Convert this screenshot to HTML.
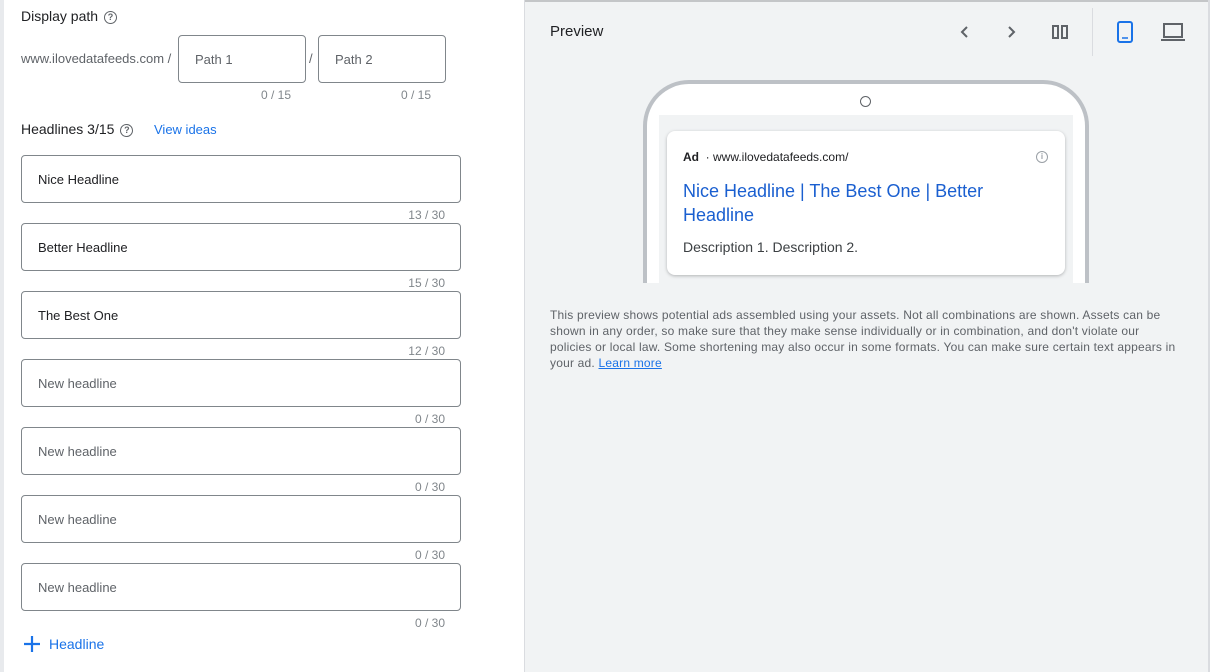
<!DOCTYPE html>
<html><head><meta charset="utf-8"><style>
*{box-sizing:border-box;margin:0;padding:0}
body{width:1210px;height:672px;overflow:hidden;font-family:"Liberation Sans",Arial,sans-serif;background:#f1f3f4;position:relative}
.a{position:absolute}
#left{left:4px;top:0;width:521px;height:672px;background:#fff;border-right:1px solid #dadce0}
.lbl{font-size:14px;color:#202124}
.q{display:inline-block;width:13px;height:13px;border:1.3px solid #5f6368;border-radius:50%;font-size:9px;line-height:11px;text-align:center;color:#5f6368;font-weight:bold;vertical-align:1px;margin-left:6px}
.in{border:1px solid #80868b;border-radius:4px;background:#fff;font-size:13px;color:#202124;padding-left:16px;display:flex;align-items:center}
.ph{color:#5f6368}
.cnt{font-size:12px;color:#80868b;text-align:right}
</style></head><body>
<div class="a" style="left:0;top:0;width:1210px;height:2px;background:#c4c6c8"></div>
<div class="a" style="left:0;top:0;width:4px;height:672px;background:#e8eaed"></div>
<div class="a" style="right:0;top:0;width:2px;height:672px;background:#dadce0"></div>
<div class="a" id="left"></div>

<div class="a lbl" style="left:21px;top:8px">Display path<span class="q">?</span></div>
<div class="a" style="left:21px;top:51px;font-size:13px;color:#5f6368">www.ilovedatafeeds.com /</div>
<div class="a in ph" style="left:178px;top:35px;width:128px;height:48px">Path 1</div>
<div class="a" style="left:309px;top:51px;font-size:13px;color:#5f6368">/</div>
<div class="a in ph" style="left:318px;top:35px;width:128px;height:48px">Path 2</div>
<div class="a cnt" style="left:240px;top:88px;width:51px">0 / 15</div>
<div class="a cnt" style="left:380px;top:88px;width:51px">0 / 15</div>

<div class="a lbl" style="left:21px;top:121px">Headlines 3/15<span class="q">?</span></div>
<div class="a" style="left:154px;top:122px;font-size:13px;color:#1a73e8">View ideas</div>

<div class="a in" style="left:21px;top:155px;width:440px;height:48px">Nice Headline</div>
<div class="a cnt" style="left:345px;top:208px;width:100px">13 / 30</div>
<div class="a in" style="left:21px;top:223px;width:440px;height:48px">Better Headline</div>
<div class="a cnt" style="left:345px;top:276px;width:100px">15 / 30</div>
<div class="a in" style="left:21px;top:291px;width:440px;height:48px">The Best One</div>
<div class="a cnt" style="left:345px;top:344px;width:100px">12 / 30</div>
<div class="a in ph" style="left:21px;top:359px;width:440px;height:48px">New headline</div>
<div class="a cnt" style="left:345px;top:412px;width:100px">0 / 30</div>
<div class="a in ph" style="left:21px;top:427px;width:440px;height:48px">New headline</div>
<div class="a cnt" style="left:345px;top:480px;width:100px">0 / 30</div>
<div class="a in ph" style="left:21px;top:495px;width:440px;height:48px">New headline</div>
<div class="a cnt" style="left:345px;top:548px;width:100px">0 / 30</div>
<div class="a in ph" style="left:21px;top:563px;width:440px;height:48px">New headline</div>
<div class="a cnt" style="left:345px;top:616px;width:100px">0 / 30</div>

<svg class="a" style="left:23px;top:635px" width="18" height="18"><path d="M9 1v16M1 9h16" stroke="#1a73e8" stroke-width="2.2"/></svg>
<div class="a" style="left:49px;top:636px;font-size:14px;color:#1a73e8">Headline</div>

<div class="a" style="left:550px;top:23px;font-size:15px;color:#202124">Preview</div>
<svg class="a" style="left:956px;top:24px" width="16" height="16"><path d="M11 3L6 8l5 5" stroke="#5f6368" stroke-width="2" fill="none"/></svg>
<svg class="a" style="left:1004px;top:24px" width="16" height="16"><path d="M5 3l5 5-5 5" stroke="#5f6368" stroke-width="2" fill="none"/></svg>
<svg class="a" style="left:1052px;top:24px" width="17" height="16"><rect x="1" y="2" width="5" height="12" fill="none" stroke="#5f6368" stroke-width="2"/><rect x="10" y="2" width="5" height="12" fill="none" stroke="#5f6368" stroke-width="2"/></svg>
<div class="a" style="left:1092px;top:8px;width:1px;height:48px;background:#dadce0"></div>
<svg class="a" style="left:1117px;top:21px" width="16" height="22"><rect x="1" y="1" width="14" height="20" rx="2" fill="none" stroke="#1a73e8" stroke-width="2"/><path d="M5 17h6" stroke="#1a73e8" stroke-width="1.5"/></svg>
<svg class="a" style="left:1161px;top:23px" width="24" height="19"><rect x="3" y="1" width="18" height="13" fill="none" stroke="#5f6368" stroke-width="2"/><path d="M0 17h24" stroke="#5f6368" stroke-width="2"/></svg>

<div class="a" style="left:643px;top:80px;width:446px;height:230px;border:4px solid #bdc1c6;border-bottom:none;border-radius:46px 46px 0 0;background:#fff"></div>
<div class="a" style="left:860px;top:96px;width:11px;height:11px;border:1px solid #5f6368;border-radius:50%"></div>
<div class="a" style="left:659px;top:115px;width:414px;height:168px;background:#f1f3f4"></div>
<div class="a" style="left:600px;top:283px;width:560px;height:30px;background:#f1f3f4"></div>
<div class="a" style="left:667px;top:131px;width:398px;height:144px;background:#fff;border-radius:8px;box-shadow:0 1px 3px rgba(60,64,67,.35)">
 <div class="a" style="left:16px;top:19px;font-size:12px;color:#202124"><b>Ad</b> &nbsp;· www.ilovedatafeeds.com/</div>
 <div class="a" style="left:369px;top:20px;width:12px;height:12px;border:1.2px solid #9aa0a6;border-radius:50%;font-size:8px;line-height:10px;text-align:center;color:#9aa0a6;font-weight:bold">i</div>
 <div class="a" style="left:16px;top:48px;width:340px;font-size:18px;line-height:24px;color:#1a5fd0">Nice Headline | The Best One | Better Headline</div>
 <div class="a" style="left:16px;top:108px;font-size:14px;color:#3c4043">Description 1. Description 2.</div>
</div>

<div class="a" style="left:550px;top:307px;width:628px;font-size:12px;line-height:16px;letter-spacing:0.2px;color:#5f6368">This preview shows potential ads assembled using your assets. Not all combinations are shown. Assets can be shown in any order, so make sure that they make sense individually or in combination, and don't violate our policies or local law. Some shortening may also occur in some formats. You can make sure certain text appears in your ad. <span style="color:#1a73e8;text-decoration:underline">Learn more</span></div>
</body></html>
